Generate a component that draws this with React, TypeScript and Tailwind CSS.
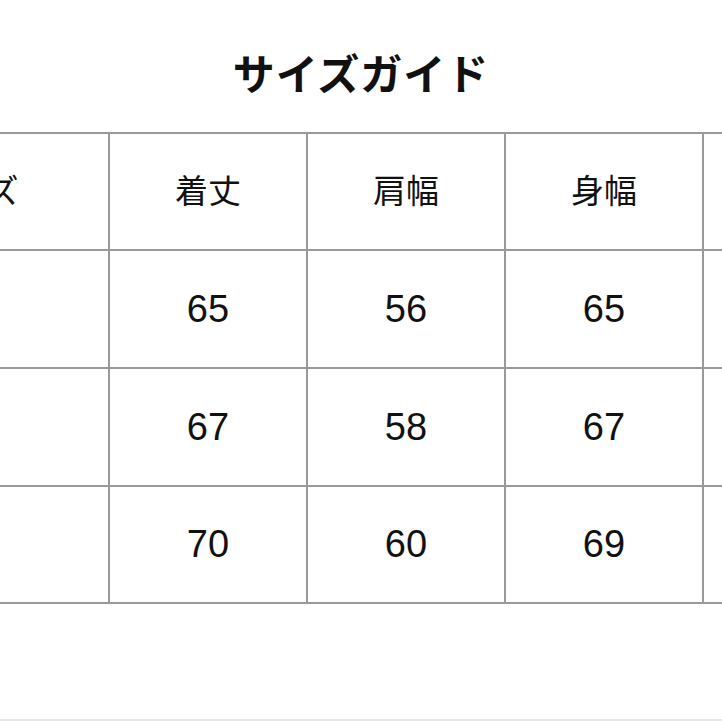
import React from "react";

const jp = "font-['Noto_Sans_CJK_JP','Noto_Sans',sans-serif]";
const num = "font-['Liberation_Sans','Arial',sans-serif]";

const headers = ["着丈", "肩幅", "身幅", ""];

const rows = [
  { h: "h-[118px]", values: ["65", "56", "65", ""] },
  { h: "h-[118px]", values: ["67", "58", "67", ""] },
  { h: "h-[117px]", values: ["70", "60", "69", ""] },
];

function Cell({ first, children, className = "" }: { first?: boolean; children?: React.ReactNode; className?: string }) {
  return (
    <div
      className={`${first ? "w-[285px]" : "w-[198px]"} shrink-0 h-full box-border border-r-2 border-[#999999] flex items-center justify-center ${className}`}
    >
      {children}
    </div>
  );
}

export default function App() {
  return (
    <div className="w-[722px] h-[722px] overflow-hidden bg-white flex flex-col text-[#111]">
      <div className="h-[132px] pt-[12px] flex items-center justify-center shrink-0">
        <h1 className={`${jp} text-[42px] leading-none font-bold tracking-[1px]`}>サイズガイド</h1>
      </div>

      <div className="ml-[-175px] w-[1200px] border-t-2 border-[#999999] shrink-0">
        <div className="h-[117px] flex box-border border-b-2 border-[#999999]">
          <Cell first className={`${jp} text-[33px] pb-[3px] pl-[6px]`}>
            サイズ
          </Cell>
          {headers.map((t, i) => (
            <Cell key={i} className={`${jp} text-[33px] pb-[3px]`}>
              {t}
            </Cell>
          ))}
        </div>
        {rows.map((r, ri) => (
          <div key={ri} className={`${r.h} flex box-border border-b-2 border-[#999999]`}>
            <Cell first />
            {r.values.map((v, i) => (
              <Cell key={i} className={`${num} text-[38px]`}>
                {v}
              </Cell>
            ))}
          </div>
        ))}
      </div>

      <div className="mt-auto mb-[1px] h-[2px] bg-[#e6e6e6] shrink-0" />
    </div>
  );
}
